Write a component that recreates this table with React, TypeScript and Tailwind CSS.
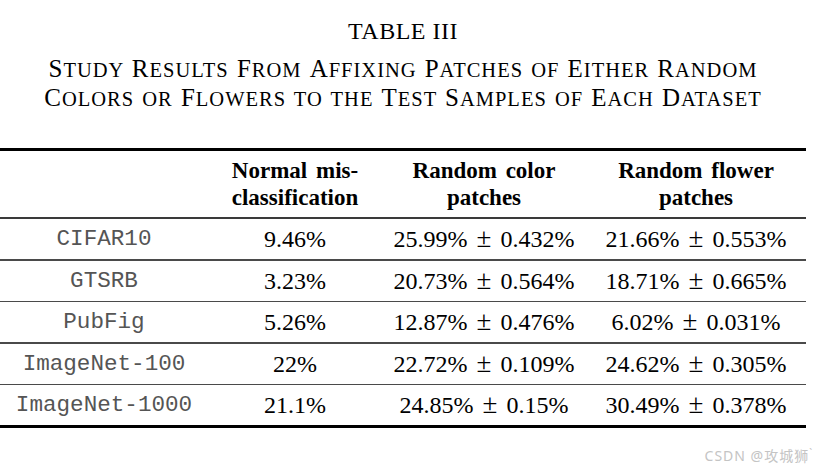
const rows = [
  { name: "CIFAR10", normal: "9.46%", color: ["25.99%", "0.432%"], flower: ["21.66%", "0.553%"] },
  { name: "GTSRB", normal: "3.23%", color: ["20.73%", "0.564%"], flower: ["18.71%", "0.665%"] },
  { name: "PubFig", normal: "5.26%", color: ["12.87%", "0.476%"], flower: ["6.02%", "0.031%"] },
  { name: "ImageNet-100", normal: "22%", color: ["22.72%", "0.109%"], flower: ["24.62%", "0.305%"] },
  { name: "ImageNet-1000", normal: "21.1%", color: ["24.85%", "0.15%"], flower: ["30.49%", "0.378%"] },
]

// IEEE-style small caps: capitals full size, the rest as smaller capitals
function SmallCaps({ text }: { text: string }) {
  const parts = text.split(/([A-Z]+)/).filter(Boolean)
  return (
    <>
      {parts.map((p, i) =>
        /^[A-Z]+$/.test(p) ? (
          <span key={i}>{p}</span>
        ) : (
          <span key={i} className="text-[20.5px] uppercase">
            {p}
          </span>
        )
      )}
    </>
  )
}

function PlusMinus({ v }: { v: string[] }) {
  return (
    <span>
      {v[0]}
      <span className="mx-[9px] text-[27px] leading-none">±</span>
      {v[1]}
    </span>
  )
}

export default function App() {
  return (
    <div className="w-[818px] h-[475px] bg-white text-black font-['Liberation_Serif',serif] overflow-hidden">
      <div className="w-[806px] pt-[19px]">
        <div className="text-center text-[24px] leading-[24px] tracking-[0.5px]">TABLE III</div>
        <div className="mt-[12px] text-center text-[25px] leading-[28px] tracking-[1px] [word-spacing:2px]">
          <div>
            <SmallCaps text="Study Results From Affixing Patches of Either Random" />
          </div>
          <div>
            <SmallCaps text="Colors or Flowers to the Test Samples of Each Dataset" />
          </div>
        </div>

        <div className="mt-[35px] border-t-[3px] border-black">
          <div className="grid grid-cols-[208px_174px_204px_220px] h-[66px] items-center text-center text-[23px] leading-[27px] font-bold [word-spacing:3px]">
            <div />
            <div>
              Normal mis-
              <br />
              classification
            </div>
            <div>
              Random color
              <br />
              patches
            </div>
            <div>
              Random flower
              <br />
              patches
            </div>
          </div>
          <div className="h-[2px] bg-[#3a3a3a]" />
          {rows.map((r, i) => (
            <div key={r.name}>
              <div className="grid grid-cols-[208px_174px_204px_220px] h-[40px] items-center text-center text-[24px] leading-[40px]">
                <div className="font-['Liberation_Mono',monospace] text-[22.6px] text-[#555]">{r.name}</div>
                <div>{r.normal}</div>
                <div>
                  <PlusMinus v={r.color} />
                </div>
                <div>
                  <PlusMinus v={r.flower} />
                </div>
              </div>
              {i < rows.length - 1 ? (
                <div className="h-[1.5px] bg-[#4a4a4a]" />
              ) : (
                <div className="h-[3px] bg-black" />
              )}
            </div>
          ))}
        </div>
      </div>
      <div className="mt-[20px] flex justify-end pr-[5px] text-[14px] leading-[16px] tracking-[1px] text-[#c4c4c4] font-['Noto_Sans','Noto_Sans_CJK_SC',sans-serif]">
        CSDN @攻城狮<span className="text-[10px] leading-[10px]">`</span>
      </div>
    </div>
  )
}
